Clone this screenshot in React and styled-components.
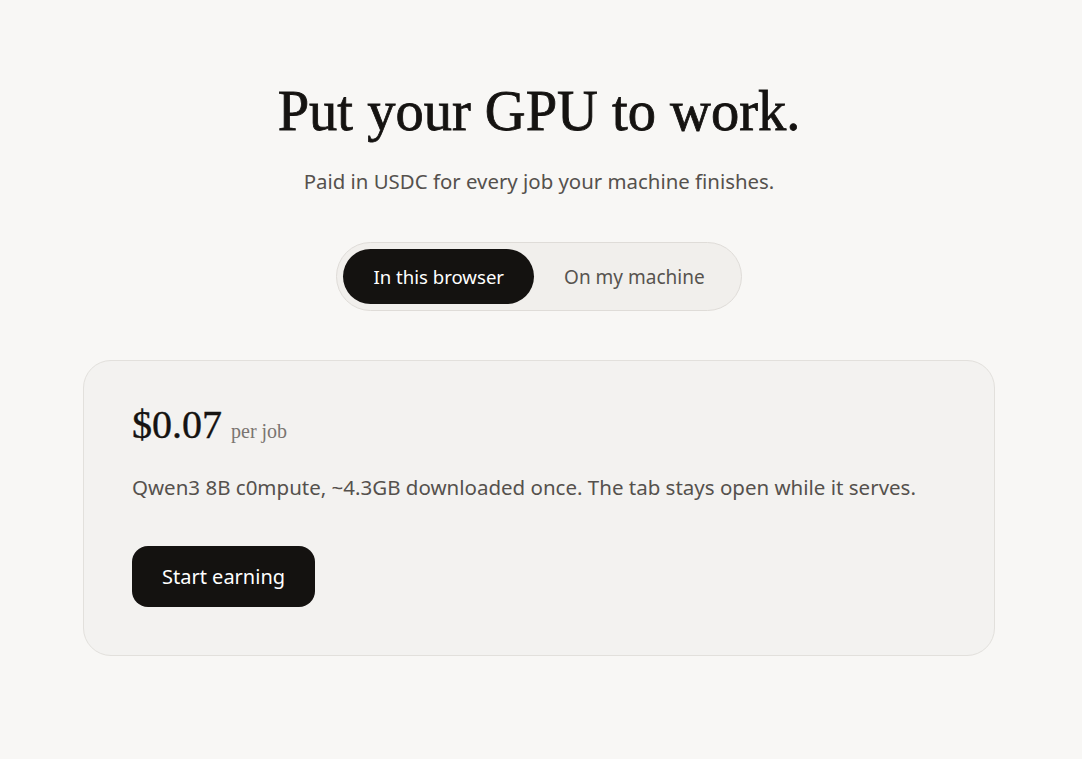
import React, { useState } from "react";
import styled, { createGlobalStyle } from "styled-components";

const Global = createGlobalStyle`
  html, body { margin: 0; padding: 0; background: #f8f7f5; }
  body { font-family: "Noto Sans", "Open Sans", sans-serif; color: #141210; }
  * { box-sizing: border-box; }
`;

const Page = styled.main`
  min-height: 759px;
  display: flex;
  flex-direction: column;
  align-items: center;
  padding: 77px 87px 0 83px;
`;

const Title = styled.h1`
  margin: 0;
  font-family: "Liberation Serif", "DejaVu Serif", serif;
  font-weight: 400;
  font-size: 56.5px;
  line-height: 68px;
  letter-spacing: 0;
  -webkit-text-stroke: 0.8px #151311;
  color: #151311;
`;

const Subtitle = styled.p`
  margin: 23px 0 0;
  font-size: 20.4px;
  line-height: 26px;
  color: #55514d;
`;

const Toggle = styled.div`
  margin-top: 48px;
  display: flex;
  padding: 6px;
  background: #f1efec;
  border: 1px solid #dfdcd8;
  border-radius: 999px;
`;

const ToggleButton = styled.button`
  border: none;
  height: 55px;
  padding: 0 30px;
  border-radius: 999px;
  font-family: inherit;
  font-size: ${(p) => (p.$active ? "18.6px" : "19px")};
  cursor: pointer;
  background: ${(p) => (p.$active ? "#141210" : "transparent")};
  color: ${(p) => (p.$active ? "#ffffff" : "#57534f")};
`;

const Card = styled.section`
  margin-top: 49px;
  width: 100%;
  max-width: 912px;
  align-self: flex-start;
  background: #f3f2f0;
  border: 1px solid #e2e0dc;
  border-radius: 28px;
  padding: 42px 48px 48px;
`;

const PriceRow = styled.div`
  display: flex;
  align-items: baseline;
  gap: 9px;
  font-family: "Liberation Serif", "DejaVu Serif", serif;
`;

const Price = styled.span`
  font-size: 40px;
  line-height: 44px;
  -webkit-text-stroke: 0.4px #151311;
  color: #151311;
`;

const Unit = styled.span`
  font-size: 20px;
  color: #7a7571;
`;

const Description = styled.p`
  margin: 27px 0 0;
  font-size: 20.5px;
  line-height: 26px;
  color: #55514d;
`;

const PrimaryButton = styled.button`
  margin-top: 46px;
  height: 61px;
  padding: 0 30px;
  border: none;
  border-radius: 16px;
  background: #141210;
  color: #ffffff;
  font-family: inherit;
  font-size: 20px;
  cursor: pointer;
`;

export default function App() {
  const [mode, setMode] = useState("browser");
  return (
    <>
      <Global />
      <Page>
        <Title>Put your GPU to work.</Title>
        <Subtitle>Paid in USDC for every job your machine finishes.</Subtitle>
        <Toggle>
          <ToggleButton $active={mode === "browser"} onClick={() => setMode("browser")}>
            In this browser
          </ToggleButton>
          <ToggleButton $active={mode === "machine"} onClick={() => setMode("machine")}>
            On my machine
          </ToggleButton>
        </Toggle>
        <Card>
          <PriceRow>
            <Price>$0.07</Price>
            <Unit>per job</Unit>
          </PriceRow>
          <Description>
            Qwen3 8B c0mpute, ~4.3GB downloaded once. The tab stays open while it serves.
          </Description>
          <PrimaryButton>Start earning</PrimaryButton>
        </Card>
      </Page>
    </>
  );
}
